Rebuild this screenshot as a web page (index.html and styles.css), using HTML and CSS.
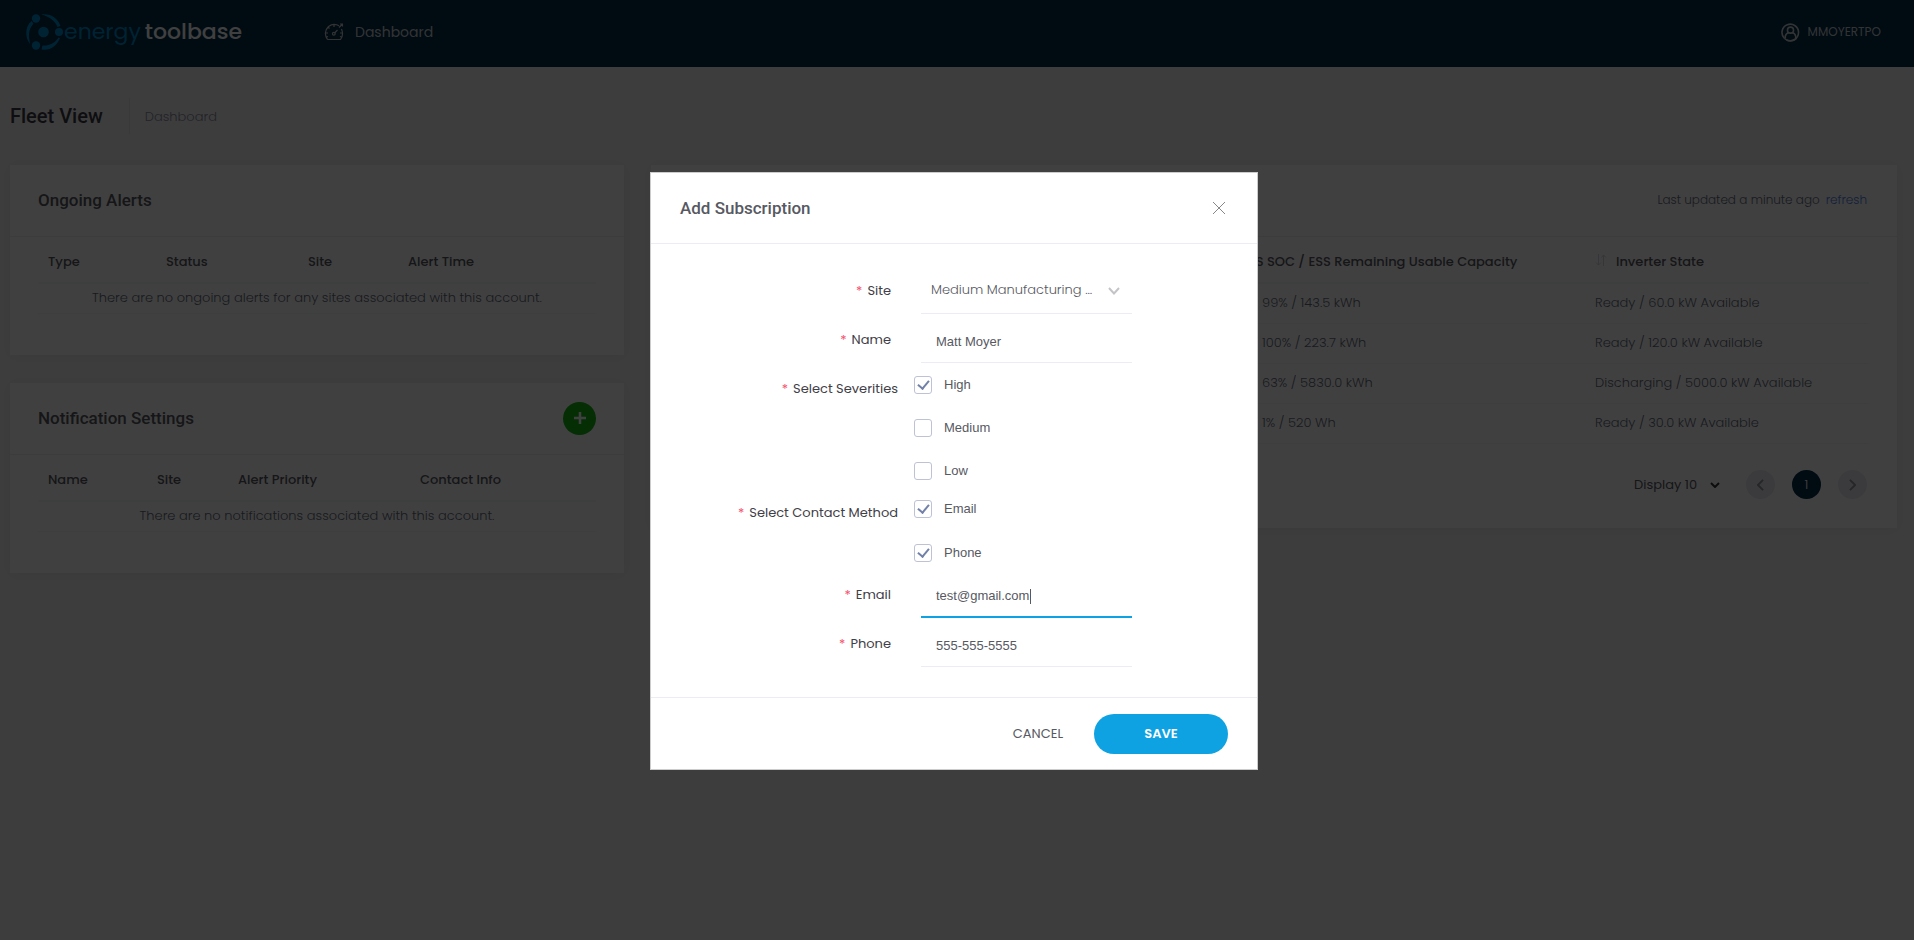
FILE: index.html
```html
<!DOCTYPE html>
<html lang="en">
<head>
<meta charset="utf-8">
<title>Fleet View</title>
<link rel="stylesheet" href="styles.css">
</head>
<body>
<div class="page">
  <header class="topbar">
    <a class="logo" href="#">
      <svg class="logo-mark" viewBox="0 0 38 38" aria-hidden="true">
        <g fill="#008ccc">
          <circle cx="18.500" cy="19" r="5.300"/>
          <circle cx="11" cy="5.500" r="4.200"/>
          <circle cx="34" cy="19" r="4"/>
          <circle cx="11" cy="32.500" r="4.200"/>
          <path d="M16 1.500C25 0 33 5 35.500 13L32.500 14C30 8 24.500 3.500 16 1.500Z"/>
          <path d="M16.500 36.500C25 38 32 33 35 25L33.500 24.500C30 30 24.500 33 17.500 32.500Z"/>
          <path d="M6.500 8C-.5 14 0 25 5 31L4.500 27C3 21 4.500 15 8.500 10.500Z"/>
        </g>
      </svg>
      <span class="logo-text"><span class="logo-energy">energy</span><span class="logo-base">toolbase</span></span>
    </a>
    <a class="nav-item" href="#">
      <svg class="nav-icon" viewBox="0 0 20 18" fill="none" stroke="currentColor" stroke-width="1.200" aria-hidden="true">
        <path d="M3.500 16.500Q1 13 1.500 9.500Q2 6 4.500 3.500Q7.500 1.300 10 1.300Q13 1.300 15 2.800M17.500 6Q20 12 16.500 16.500H3.500M10 1.500V4M1.500 10H4M16 10H18.500M4 4L5.500 5.500M2.500 14L4 13.500M17.500 14L16 13.500M15 4.500L18.500 1M16 1H18.500V3.500"/>
        <path d="M10.500 10L13.500 7"/><circle cx="9.800" cy="10.800" r="1.400"/>
      </svg>
      <span>Dashboard</span>
    </a>
    <a class="user" href="#">
      <svg class="user-icon" viewBox="0 0 20 20" fill="none" stroke="currentColor" stroke-width="1.700" aria-hidden="true">
        <path d="M3.500 16A8.700 8.700 0 1 1 6 17.800"/><path d="M3.500 16A8.700 8.700 0 0 0 16.500 16"/><circle cx="10" cy="7.500" r="3.200"/>
        <path d="M4.500 16V14Q5 11 8 10.300M12 10.300Q15 11 15.500 14V16"/>
      </svg>
      <span>MMOYERTPO</span>
    </a>
  </header>

  <div class="heading">
    <h1 class="heading-title">Fleet View</h1>
    <a class="crumb" href="#">Dashboard</a>
  </div>

  <main class="columns">
    <div class="left">
      <section class="card">
        <div class="card-head"><h2 class="card-title">Ongoing Alerts</h2></div>
        <div class="card-body">
          <table class="grid alerts">
            <colgroup><col class="a1"><col class="a2"><col class="a3"><col></colgroup>
            <thead><tr><th>Type</th><th>Status</th><th>Site</th><th>Alert Time</th></tr></thead>
            <tbody><tr><td class="empty" colspan="4">There are no ongoing alerts for any sites associated with this account.</td></tr></tbody>
          </table>
        </div>
      </section>
      <section class="card">
        <div class="card-head">
          <h2 class="card-title">Notification Settings</h2>
          <button class="add" type="button" aria-label="Add subscription">
            <svg class="add-icon" viewBox="0 0 12 12" stroke="#fff" stroke-width="2.500" aria-hidden="true"><path d="M6 0V12M0 6H12"/></svg>
          </button>
        </div>
        <div class="card-body">
          <table class="grid notices">
            <colgroup><col class="n1"><col class="n2"><col class="n3"><col></colgroup>
            <thead><tr><th>Name</th><th>Site</th><th>Alert Priority</th><th>Contact Info</th></tr></thead>
            <tbody><tr><td class="empty" colspan="4">There are no notifications associated with this account.</td></tr></tbody>
          </table>
        </div>
      </section>
    </div>

    <section class="card fleet">
      <div class="card-head fleet-head"><span>Last updated a minute ago</span><a class="refresh" href="#">refresh</a></div>
      <div class="card-body">
        <table class="grid sites">
          <colgroup><col class="s1"><col class="s2"><col></colgroup>
          <thead><tr><th></th>
            <th><svg class="sort" viewBox="0 0 12 12" fill="none" stroke="currentColor" aria-hidden="true"><path d="M3.500 0V11M1 8.500L3.500 11L6 8.500M8.500 12V1M6.500 3.500L8.500 1L11 3.500"/></svg>ESS SOC / ESS Remaining Usable Capacity</th>
            <th><svg class="sort" viewBox="0 0 12 12" fill="none" stroke="currentColor" aria-hidden="true"><path d="M3.500 0V11M1 8.500L3.500 11L6 8.500M8.500 12V1M6.500 3.500L8.500 1L11 3.500"/></svg>Inverter State</th></tr></thead>
          <tbody>
            <tr><td></td><td class="charge">99% / 143.5 kWh</td><td>Ready / 60.0 kW Available</td></tr>
            <tr><td></td><td class="charge">100% / 223.7 kWh</td><td>Ready / 120.0 kW Available</td></tr>
            <tr><td></td><td class="charge">63% / 5830.0 kWh</td><td>Discharging / 5000.0 kW Available</td></tr>
            <tr><td></td><td class="charge">1% / 520 Wh</td><td>Ready / 30.0 kW Available</td></tr>
          </tbody>
        </table>
        <div class="pager">
          <span class="display">
            <select class="display-select" aria-label="Rows per page"><option>Display 10</option></select>
            <svg class="display-arrow" viewBox="0 0 10 6" fill="none" stroke="#333" stroke-width="2" aria-hidden="true"><path d="M1 1L5 5L9 1"/></svg>
          </span>
          <button class="page-btn" type="button" aria-label="Previous page"><svg class="page-arrow" viewBox="0 0 8 14" fill="none" stroke="currentColor" stroke-width="2.200"><path d="M7 1L1 7L7 13"/></svg></button>
          <button class="page-btn current" type="button">1</button>
          <button class="page-btn" type="button" aria-label="Next page"><svg class="page-arrow" viewBox="0 0 8 14" fill="none" stroke="currentColor" stroke-width="2.200"><path d="M1 1L7 7L1 13"/></svg></button>
        </div>
      </div>
    </section>
  </main>
</div>

<div class="overlay">
  <form class="modal" role="dialog" aria-labelledby="modal-title">
    <div class="modal-head">
      <h2 class="modal-title" id="modal-title">Add Subscription</h2>
      <button class="close" type="button" aria-label="Close"><svg class="close-icon" viewBox="0 0 12 12" stroke="currentColor" aria-hidden="true"><path d="M0 0L12 12M12 0L0 12"/></svg></button>
    </div>
    <div class="modal-body">
      <div class="row">
        <label class="label" for="site">Site</label>
        <span class="control">
          <select class="field site-select" id="site"><option>Medium Manufacturing Facility</option></select>
          <svg class="site-arrow" viewBox="0 0 12 8" fill="none" stroke="#c4c4c8" stroke-width="2" aria-hidden="true"><path d="M1 1L6 6.500L11 1"/></svg>
        </span>
      </div>
      <div class="row">
        <label class="label" for="name">Name</label>
        <input class="field" id="name" type="text" value="Matt Moyer">
      </div>
      <div class="row checks" role="group" aria-labelledby="sev">
        <span class="label" id="sev">Select Severities</span>
        <div class="options">
          <label class="option"><input class="box" type="checkbox" checked>High</label>
          <label class="option"><input class="box" type="checkbox">Medium</label>
          <label class="option"><input class="box" type="checkbox">Low</label>
        </div>
      </div>
      <div class="row checks" role="group" aria-labelledby="method">
        <span class="label" id="method">Select Contact Method</span>
        <div class="options methods">
          <label class="option"><input class="box" type="checkbox" checked>Email</label>
          <label class="option"><input class="box" type="checkbox" checked>Phone</label>
        </div>
      </div>
      <div class="row">
        <label class="label" for="email">Email</label>
        <span class="control">
          <input class="field active" id="email" type="text" value="test@gmail.com" autofocus>
          <span class="caret"></span>
        </span>
      </div>
      <div class="row">
        <label class="label" for="phone">Phone</label>
        <input class="field" id="phone" type="text" value="555-555-5555">
      </div>
    </div>
    <div class="modal-foot">
      <button class="cancel" type="button">CANCEL</button>
      <button class="save" type="submit">SAVE</button>
    </div>
  </form>
</div>
</body>
</html>
```
FILE: styles.css
```css
* { box-sizing: border-box; }
body {
  margin: 0;
  min-height: 100vh;
  background: #f4f4f6;
  color: #646c7a;
  font: 300 13px/20px Poppins, Inter, sans-serif;
}
a { color: inherit; text-decoration: none; }
button, input, select { font: inherit; color: inherit; border: 0; background: none; padding: 0; margin: 0; border-radius: 0; }
select { appearance: none; }
h1, h2 { margin: 0; font-family: Roboto, sans-serif; font-weight: 500; }

.topbar {
  display: flex;
  align-items: center;
  height: 67px;
  padding: 0 33px 3px 25px;
  background: #002c48;
  color: #fff;
}
.logo { display: flex; align-items: center; width: 299px; }
.logo-mark { width: 38px; height: 38px; }
.logo-text { display: flex; gap: 4px; padding-left: 1px; font: 400 22px/30px Poppins, Lato, sans-serif; }
.logo-energy { color: #008ccc; }
.logo-base { font-weight: 500; }
.nav-item { display: flex; align-items: center; gap: 11px; font-size: 14px; font-weight: 400; color: #c8ccd0; }
.nav-icon { width: 20px; height: 18px; }
.user { display: flex; align-items: center; gap: 8px; margin-left: auto; font-size: 12px; color: #c8ccd0; font-weight: 400; }
.user-icon { width: 19px; height: 19px; }

.heading { display: flex; align-items: center; height: 98px; padding-left: 10px; }
.heading-title { padding-right: 26px; font-size: 20px; line-height: 36px; color: #3a3a44; border-right: 1px solid #e4e4ea; }
.crumb { padding: 2px 0 0 15px; color: #8a8c99; }

.columns { display: grid; grid-template-columns: 614px 1fr; gap: 27px; align-items: start; padding: 0 17px 0 10px; }
.left { display: grid; gap: 28px; }
.card { background: #fff; box-shadow: 0 1px 15px 1px rgba(69, 65, 78, .08); }
.card-head { display: flex; align-items: center; justify-content: space-between; height: 72px; padding: 0 28px 1px; border-bottom: 1px solid #ebedf2; }
.card-title { font-size: 17px; color: #575962; }
.card-body { padding: 5px 28px 0; }
.left .card { height: 190px; }
.grid { width: 100%; border-collapse: collapse; table-layout: fixed; }
.grid th { height: 41px; padding: 0 10px 1px; text-align: left; font-weight: 500; color: #575962; border-bottom: 2px solid #f4f5f8; white-space: nowrap; }
.grid td { height: 40px; padding: 0 10px; border-bottom: 1px solid #f4f5f8; white-space: nowrap; }
.grid .empty { height: 30px; padding: 0; text-align: center; }
.grid .charge { padding-left: 52px; }
.a1 { width: 118px; } .a2 { width: 142px; } .a3 { width: 100px; }
.n1 { width: 109px; } .n2 { width: 81px; } .n3 { width: 182px; }
.s1 { width: 531px; } .s2 { width: 375px; }
.add { display: grid; place-items: center; width: 33px; height: 33px; border-radius: 50%; background: #14b814; }
.add-icon { width: 12px; height: 12px; }

.fleet { height: 363px; }
.fleet-head { justify-content: flex-end; gap: 6px; padding-right: 30px; font-size: 12px; }
.refresh { color: #4a7fe8; }
.sort { width: 12px; height: 12px; margin-right: 9px; color: #d8d8e0; }
.pager { display: flex; align-items: center; justify-content: flex-end; height: 82px; padding-right: 2px; }
.display { position: relative; margin-right: 26px; color: #575962; font-weight: 400; }
.display-select { width: 86px; height: 30px; }
.display-arrow { position: absolute; right: 0; top: 12px; width: 10px; height: 6px; pointer-events: none; }
.page-btn { display: grid; place-items: center; width: 29px; height: 29px; margin-left: 17px; border-radius: 50%; background: #ebe9f2; color: #9699a2; }
.display + .page-btn { margin-left: 0; }
.current { background: #002c48; color: #fff; }
.page-arrow { width: 7px; height: 12px; }

.overlay { position: fixed; inset: 0; display: flex; align-items: flex-start; justify-content: center; padding: 172px 6px 0 0; background: rgba(0, 0, 0, .75); }
.modal { width: 608px; background: #fff; border: 1px solid #ccc; color: #575962; }
.modal-head { display: flex; align-items: center; justify-content: space-between; height: 71px; padding: 0 32px 0 29px; border-bottom: 1px solid #ebedf2; }
.modal-title { font-size: 17px; color: #575962; }
.close { display: grid; color: #888; }
.close-icon { width: 12px; height: 12px; }
.modal-body { padding: 21px 0 30px; }
.row { display: grid; grid-template-columns: 240px 211px; column-gap: 30px; height: 49px; align-items: center; }
.label { padding-top: 3px; text-align: right; font-weight: 400; color: #3f4047; }
.label::before { content: "*"; margin-right: 5px; color: #f4516c; }
.field { width: 211px; height: 100%; padding: 6px 15px 0; border-bottom: 1px solid #ebedf2; font: 13px "Liberation Sans", Arial, sans-serif; outline: 0; }
.field.active { border-bottom: 2px solid #0ea2e3; caret-color: transparent; }
.control { position: relative; height: 100%; }
.caret { position: absolute; left: 109px; top: 20px; width: 1px; height: 15px; background: #575962; }
.site-select { padding: 0 38px 0 10px; font: 300 13px Poppins, Inter, sans-serif; text-overflow: ellipsis; }
.site-arrow { position: absolute; right: 12px; top: 22px; width: 12px; height: 8px; pointer-events: none; }
.checks { grid-template-columns: 247px 211px; column-gap: 16px; height: auto; align-items: start; }
.checks .label { padding-top: 16px; }
.options { display: grid; gap: 25px; padding: 13px 0 7px; }
.methods { gap: 26px; }
.option { display: flex; align-items: center; gap: 12px; height: 18px; font: 13px/18px "Liberation Sans", Arial, sans-serif; }
.box { appearance: none; width: 18px; height: 18px; border: 1px solid #bdc3d4; border-radius: 3px; display: grid; place-items: center; }
.box:checked::before { content: ""; width: 5px; height: 9px; margin-bottom: 3px; border: solid #7281a8; border-width: 0 2px 2px 0; transform: rotate(40deg); }
.modal-foot { display: flex; align-items: center; justify-content: flex-end; gap: 31px; height: 72px; padding: 0 29px; border-top: 1px solid #ebedf2; }
.cancel { font-weight: 400; }
.save { width: 134px; height: 40px; border-radius: 20px; background: #0ea2e3; color: #fff; font-weight: 600; }
```
